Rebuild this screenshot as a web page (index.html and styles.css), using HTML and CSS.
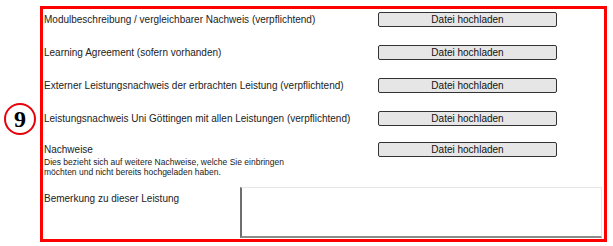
FILE: index.html
```html
<!DOCTYPE html>
<html lang="de">
<head>
    <meta charset="UTF-8">
    <meta name="viewport" content="width=device-width, initial-scale=1.0">
    <title>Nachweise hochladen</title>
    <link rel="stylesheet" href="styles.css">
</head>

<body>
    <div class="page">
        <!-- Schritt-Nummer -->
        <div class="step-badge">9</div>

        <div class="upload-box">
            <div class="upload-list">
                <div class="upload-row">
                    <span class="label">Modulbeschreibung / vergleichbarer Nachweis (verpflichtend)</span>
                    <button class="upload-button">Datei hochladen</button>
                </div>
                <div class="upload-row">
                    <span class="label">Learning Agreement (sofern vorhanden)</span>
                    <button class="upload-button">Datei hochladen</button>
                </div>
                <div class="upload-row">
                    <span class="label">Externer Leistungsnachweis der erbrachten Leistung (verpflichtend)</span>
                    <button class="upload-button">Datei hochladen</button>
                </div>
                <div class="upload-row">
                    <span class="label">Leistungsnachweis Uni Göttingen mit allen Leistungen (verpflichtend)</span>
                    <button class="upload-button">Datei hochladen</button>
                </div>
            </div>

            <!-- Weitere Nachweise -->
            <div class="upload-row extra">
                <div>
                    <span class="label">Nachweise</span>
                    <p class="hint">Dies bezieht sich auf weitere Nachweise, welche Sie einbringen<br>möchten und nicht bereits hochgeladen haben.</p>
                </div>
                <button class="upload-button">Datei hochladen</button>
            </div>

            <div class="comment-row">
                <label class="label comment-label" for="comment">Bemerkung zu dieser Leistung</label>
                <textarea id="comment" class="comment-input"></textarea>
            </div>
        </div>
    </div>
</body>

</html>
```

FILE: styles.css
```css
/* Grundlayout */
body {
    margin: 0;
    padding: 0;
    background-color: #fff;
    font-family: 'Liberation Sans', Arial, sans-serif;
    color: #222;
}

.page {
    display: flex;
    align-items: flex-start;
    padding-top: 6px;
}

.step-badge {
    width: 32px;
    height: 32px;
    box-sizing: border-box;
    margin: 97px 4px 0 4px;
    border: 2px solid #e8000b;
    border-radius: 50%;
    display: flex;
    align-items: center;
    justify-content: center;
    font-family: 'Liberation Serif', 'Times New Roman', serif;
    font-weight: bold;
    font-size: 24px;
    line-height: 1;
    color: #000;
}

.upload-box {
    width: 567px;
    height: 236px;
    box-sizing: border-box;
    border: 3px solid #ff0000;
    padding: 3px 2px 0 1px;
}

.upload-list {
    display: flex;
    flex-direction: column;
    gap: 18px;
}

.upload-row {
    display: grid;
    grid-template-columns: 334px 179px;
    align-items: center;
}

.upload-row.extra {
    margin-top: 16px;
    align-items: start;
}

.label {
    display: block;
    font-size: 10px;
    line-height: 15px;
}

.hint {
    margin: 0;
    font-size: 8.5px;
    line-height: 10px;
}

.upload-button {
    height: 15px;
    width: 179px;
    box-sizing: border-box;
    padding: 0;
    border: 1px solid #333;
    border-radius: 2px;
    background-color: #e6e6e6;
    font-family: 'Liberation Sans', Arial, sans-serif;
    font-size: 10px;
    line-height: 13px;
    color: #111;
    cursor: pointer;
}

/* Bemerkungsfeld */
.comment-row {
    display: grid;
    grid-template-columns: 196px 362px;
    align-items: start;
    margin-top: 10px;
}

.comment-label {
    margin-top: 4px;
}

.comment-input {
    display: block;
    height: 51px;
    box-sizing: border-box;
    margin: 0;
    resize: none;
    border-style: solid;
    border-width: 1px 1px 2px 2px;
    border-color: #e6e6e6 #e6e6e6 #8c8c8c #6e6e6e;
    background-color: #fff;
}
```
